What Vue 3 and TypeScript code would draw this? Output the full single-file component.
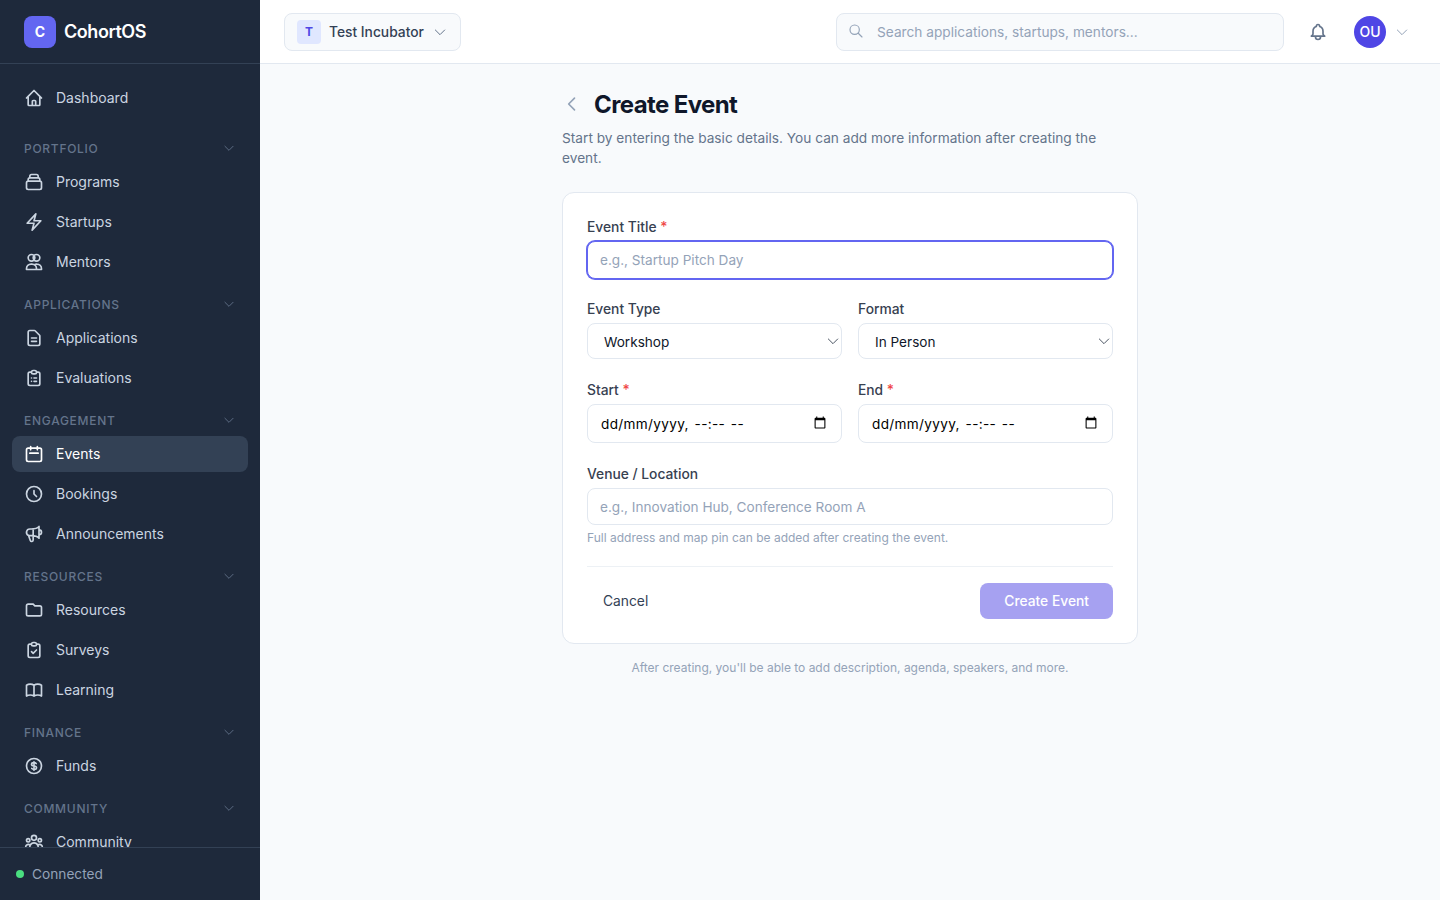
<script setup lang="ts">
interface Item { label: string; d: string; active?: boolean }
interface Section { title: string; items: Item[] }

const home = 'M3 12l2-2m0 0l7-7 7 7M5 10v10a1 1 0 001 1h3m10-11l2 2m-2-2v10a1 1 0 01-1 1h-3m-6 0a1 1 0 001-1v-4a1 1 0 011-1h2a1 1 0 011 1v4a1 1 0 001 1m-6 0h6'
const chevronDown = 'M19 9l-7 7-7-7'

const sections: Section[] = [
  { title: 'Portfolio', items: [
    { label: 'Programs', d: 'M19 11H5m14 0a2 2 0 012 2v6a2 2 0 01-2 2H5a2 2 0 01-2-2v-6a2 2 0 012-2m14 0V9a2 2 0 00-2-2M5 11V9a2 2 0 012-2m0 0V5a2 2 0 012-2h6a2 2 0 012 2v2M7 7h10' },
    { label: 'Startups', d: 'M3.75 13.5l10.5-11.25L12 10.5h8.25L9.75 21.75 12 13.5H3.75z' },
    { label: 'Mentors', d: 'M9 3a4 4 0 100 8 4 4 0 000-8zM15 3a4 4 0 100 8 4 4 0 000-8zM3 21v-1a5.5 5.5 0 015.5-5.5h1A5.5 5.5 0 0115 20v1M12.5 15.2a5.5 5.5 0 013-.7A5.5 5.5 0 0121 20v1M3 21h18' }
  ] },
  { title: 'Applications', items: [
    { label: 'Applications', d: 'M9 12h6m-6 4h6m2 5H7a2 2 0 01-2-2V5a2 2 0 012-2h5.586a1 1 0 01.707.293l5.414 5.414a1 1 0 01.293.707V19a2 2 0 01-2 2z' },
    { label: 'Evaluations', d: 'M9 5H7a2 2 0 00-2 2v12a2 2 0 002 2h10a2 2 0 002-2V7a2 2 0 00-2-2h-2M9 5a2 2 0 002 2h2a2 2 0 002-2M9 5a2 2 0 012-2h2a2 2 0 012 2m-3 7h3m-3 4h3m-6-4h.01M9 16h.01' }
  ] },
  { title: 'Engagement', items: [
    { label: 'Events', active: true, d: 'M8 7V3m8 4V3m-9 8h10M5 21h14a2 2 0 002-2V7a2 2 0 00-2-2H5a2 2 0 00-2 2v12a2 2 0 002 2z' },
    { label: 'Bookings', d: 'M12 8v4l3 3m6-3a9 9 0 11-18 0 9 9 0 0118 0z' },
    { label: 'Announcements', d: 'M11 5.882V19.24a1.76 1.76 0 01-3.417.592l-2.147-6.15M18 13a3 3 0 100-6M5.436 13.683A4.001 4.001 0 017 6h1.832c4.1 0 7.625-1.234 9.168-3v14c-1.543-1.766-5.067-3-9.168-3H7a3.988 3.988 0 01-1.564-.317z' }
  ] },
  { title: 'Resources', items: [
    { label: 'Resources', d: 'M3 7v10a2 2 0 002 2h14a2 2 0 002-2V9a2 2 0 00-2-2h-6l-2-2H5a2 2 0 00-2 2z' },
    { label: 'Surveys', d: 'M9 5H7a2 2 0 00-2 2v12a2 2 0 002 2h10a2 2 0 002-2V7a2 2 0 00-2-2h-2M9 5a2 2 0 002 2h2a2 2 0 002-2M9 5a2 2 0 012-2h2a2 2 0 012 2m-6 9l2 2 4-4' },
    { label: 'Learning', d: 'M12 6.253v13m0-13C10.832 5.477 9.246 5 7.5 5S4.168 5.477 3 6.253v13C4.168 18.477 5.754 18 7.5 18s3.332.477 4.5 1.253m0-13C13.168 5.477 14.754 5 16.5 5c1.747 0 3.332.477 4.5 1.253v13C19.832 18.477 18.247 18 16.5 18c-1.746 0-3.332.477-4.5 1.253' }
  ] },
  { title: 'Finance', items: [
    { label: 'Funds', d: 'M12 8c-1.657 0-3 .895-3 2s1.343 2 3 2 3 .895 3 2-1.343 2-3 2m0-8c1.11 0 2.08.402 2.599 1M12 8V7m0 1v8m0 0v1m0-1c-1.11 0-2.08-.402-2.599-1M21 12a9 9 0 11-18 0 9 9 0 0118 0z' }
  ] },
  { title: 'Community', items: [
    { label: 'Community', d: 'M17 20h5v-2a3 3 0 00-5.356-1.857M17 20H7m10 0v-2c0-.656-.126-1.283-.356-1.857M7 20H2v-2a3 3 0 015.356-1.857M7 20v-2c0-.656.126-1.283.356-1.857m0 0a5.002 5.002 0 019.288 0M15 7a3 3 0 11-6 0 3 3 0 016 0zm6 3a2 2 0 11-4 0 2 2 0 014 0zM7 10a2 2 0 11-4 0 2 2 0 014 0z' }
  ] }
]
</script>

<template>
  <div class="app">
    <aside class="sidebar">
      <div class="brand">
        <div class="logo">C</div>
        <span class="brand-name">CohortOS</span>
      </div>
      <nav class="nav">
        <a class="item top-item">
          <svg class="icon" viewBox="0 0 24 24"><path :d="home" /></svg>
          <span>Dashboard</span>
        </a>
        <section v-for="s in sections" :key="s.title" class="group">
          <div class="group-head">
            <span>{{ s.title }}</span>
            <svg class="group-chev" viewBox="0 0 24 24"><path :d="chevronDown" /></svg>
          </div>
          <a v-for="i in s.items" :key="i.label" class="item" :class="{ active: i.active }">
            <svg class="icon" viewBox="0 0 24 24"><path :d="i.d" /></svg>
            <span>{{ i.label }}</span>
          </a>
        </section>
      </nav>
      <div class="status">
        <span class="dot"></span>
        <span>Connected</span>
      </div>
    </aside>

    <div class="main">
      <header class="topbar">
        <button class="tenant" type="button">
          <span class="tenant-badge">T</span>
          <span class="tenant-name">Test Incubator</span>
          <svg class="tenant-chev" viewBox="0 0 24 24"><path :d="chevronDown" /></svg>
        </button>
        <div class="top-right">
          <div class="search">
            <svg class="search-icon" viewBox="0 0 24 24"><path d="M21 21l-6-6m2-5a7 7 0 11-14 0 7 7 0 0114 0z" /></svg>
            <input type="text" placeholder="Search applications, startups, mentors..." />
          </div>
          <svg class="bell" viewBox="0 0 24 24"><path d="M15 17h5l-1.405-1.405A2.032 2.032 0 0118 14.158V11a6.002 6.002 0 00-4-5.659V5a2 2 0 10-4 0v.341C7.67 6.165 6 8.388 6 11v3.159c0 .538-.214 1.055-.595 1.436L4 17h5m6 0v1a3 3 0 11-6 0v-1m6 0H9" /></svg>
          <div class="user">
            <span class="avatar">OU</span>
            <svg class="user-chev" viewBox="0 0 24 24"><path :d="chevronDown" /></svg>
          </div>
        </div>
      </header>

      <main class="content">
        <div class="page">
          <div class="title-row">
            <svg class="back" viewBox="0 0 24 24"><path d="M15 19l-7-7 7-7" /></svg>
            <h1>Create Event</h1>
          </div>
          <p class="desc">Start by entering the basic details. You can add more information after creating the event.</p>

          <form class="card" @submit.prevent>
            <div class="field">
              <label>Event Title <em>*</em></label>
              <input class="control focused" type="text" placeholder="e.g., Startup Pitch Day" />
            </div>
            <div class="row">
              <div class="field">
                <label>Event Type</label>
                <div class="select-wrap">
                  <select class="control select"><option>Workshop</option></select>
                  <svg class="select-chev" viewBox="0 0 24 24"><path :d="chevronDown" /></svg>
                </div>
              </div>
              <div class="field">
                <label>Format</label>
                <div class="select-wrap">
                  <select class="control select"><option>In Person</option></select>
                  <svg class="select-chev" viewBox="0 0 24 24"><path :d="chevronDown" /></svg>
                </div>
              </div>
            </div>
            <div class="row">
              <div class="field">
                <label>Start <em>*</em></label>
                <div class="date-wrap">
                  <input class="control date" type="datetime-local" />
                  <span class="date-mask">dd/mm/yyyy, --:-- --</span>
                </div>
              </div>
              <div class="field">
                <label>End <em>*</em></label>
                <div class="date-wrap">
                  <input class="control date" type="datetime-local" />
                  <span class="date-mask">dd/mm/yyyy, --:-- --</span>
                </div>
              </div>
            </div>
            <div class="field venue">
              <label>Venue / Location</label>
              <input class="control venue-input" type="text" placeholder="e.g., Innovation Hub, Conference Room A" />
              <p class="hint">Full address and map pin can be added after creating the event.</p>
            </div>
            <div class="actions">
              <button class="cancel" type="button">Cancel</button>
              <button class="submit" type="submit" disabled>Create Event</button>
            </div>
          </form>
          <p class="note">After creating, you'll be able to add description, agenda, speakers, and more.</p>
        </div>
      </main>
    </div>
  </div>
</template>

<style>
html, body { margin: 0; height: 100%; }
</style>

<style scoped>
* { box-sizing: border-box; }
svg { fill: none; stroke: currentColor; stroke-width: 2; stroke-linecap: round; stroke-linejoin: round; flex: none; display: block; }

.app { display: flex; height: 100vh; overflow: hidden; font-family: Inter, "Liberation Sans", sans-serif; font-size: 14px; background: #f8fafc; }

.sidebar { width: 260px; flex: none; display: flex; flex-direction: column; height: 100%; background: #1e293b; color: #cbd5e1; }
.brand { height: 64px; flex: none; display: flex; align-items: center; gap: 8px; padding: 0 24px; border-bottom: 1px solid #334155; }
.logo { width: 32px; height: 32px; border-radius: 8px; background: #6366f1; color: #fff; font-size: 14px; font-weight: 700; display: flex; align-items: center; justify-content: center; }
.brand-name { font-size: 18px; font-weight: 600; letter-spacing: -0.025em; color: #fff; }

.nav { flex: 1; min-height: 0; overflow: hidden; padding: 16px 12px 0; }
.item { display: flex; align-items: center; gap: 12px; height: 36px; padding: 0 12px; margin-bottom: 4px; border-radius: 8px; line-height: 20px; }
.top-item { margin-bottom: 12px; }
.item.active { background: #334155; color: #fff; }
.icon { width: 20px; height: 20px; }
.group { padding-top: 12px; }
.group-head { display: flex; align-items: center; justify-content: space-between; height: 16px; margin-bottom: 8px; padding: 0 12px; font-size: 12px; font-weight: 500; letter-spacing: 0.06em; text-transform: uppercase; color: #64748b; }
.group-chev { width: 14px; height: 14px; stroke-width: 1.5; }

.status { height: 53px; flex: none; display: flex; align-items: center; gap: 8px; padding: 0 16px 1px; border-top: 1px solid #334155; font-size: 13.7px; color: #94a3b8; }
.dot { width: 8px; height: 8px; border-radius: 50%; background: #4ade80; }

.main { flex: 1; min-width: 0; display: flex; flex-direction: column; }
.topbar { height: 64px; flex: none; display: flex; align-items: center; justify-content: space-between; padding: 0 24px; background: #fff; border-bottom: 1px solid #e2e8f0; }
.tenant { display: flex; align-items: center; gap: 8px; height: 38px; padding: 0 12px; border: 1px solid #e2e8f0; border-radius: 8px; background: #f8fafc; font: inherit; font-size: 13.8px; font-weight: 500; color: #334155; }
.tenant-badge { width: 24px; height: 24px; border-radius: 4px; background: #e0e7ff; color: #4f46e5; font-size: 12px; font-weight: 700; display: flex; align-items: center; justify-content: center; }
.tenant-chev { width: 16px; height: 16px; stroke-width: 1.5; color: #64748b; }
.top-right { display: flex; align-items: center; }
.search { width: 448px; height: 38px; display: flex; align-items: center; gap: 13px; padding: 0 12px; border: 1px solid #e2e8f0; border-radius: 8px; background: #f8fafc; }
.search-icon { width: 16px; height: 16px; margin: -2px 0 0 -1px; stroke-width: 1.75; color: #94a3b8; }
.search input { flex: 1; min-width: 0; border: 0; outline: 0; background: transparent; padding: 0; font: inherit; font-size: 13.7px; }
input::placeholder { color: #94a3b8; opacity: 1; }
.bell { width: 20px; height: 20px; margin-left: 24px; color: #64748b; }
.user { display: flex; align-items: center; gap: 8px; margin-left: 26px; padding-right: 6px; }
.avatar { width: 32px; height: 32px; border-radius: 50%; background: #4f46e5; color: #fff; font-weight: 500; display: flex; align-items: center; justify-content: center; }
.user-chev { width: 16px; height: 16px; stroke-width: 1.5; color: #94a3b8; }

.content { flex: 1; min-height: 0; overflow: hidden; padding: 24px; }
.page { width: 576px; margin: 0 auto; }
.title-row { display: flex; align-items: center; gap: 12px; height: 32px; }
.back { width: 20px; height: 20px; color: #94a3b8; }
h1 { margin: 0; padding-top: 2px; font-size: 24px; line-height: 32px; font-weight: 700; letter-spacing: -0.025em; color: #0f172a; }
.desc { margin: 8px 0 0; font-size: 13.7px; line-height: 20px; color: #64748b; }

.card { margin-top: 24px; padding: 24px; background: #fff; border: 1px solid #e2e8f0; border-radius: 12px; }
.field { display: flex; flex-direction: column; min-width: 0; margin-bottom: 20px; }
.row { display: grid; grid-template-columns: 1fr 1fr; gap: 16px; }
label { display: block; font-size: 13.8px; font-weight: 500; line-height: 20px; margin-bottom: 4px; color: #374151; }
label em { font-style: normal; color: #ef4444; }
.control { width: 100%; height: 38px; padding: 0 12px; border: 1px solid #e2e8f0; border-radius: 8px; background: #fff; font: inherit; font-size: 13.6px; color: #0f172a; outline: 0; }
.focused { border-color: #6366f1; box-shadow: 0 0 0 1px #6366f1; }
.select-wrap { position: relative; height: 36.5px; }
.select { display: block; height: 36px; padding: 2px 16px 0; appearance: none; }
.select-chev { position: absolute; top: 10px; right: 1px; width: 16px; height: 16px; stroke-width: 1.5; color: #4b5563; pointer-events: none; }
.date-wrap { position: relative; height: 40px; }
.date { display: block; height: 39.5px; }
.date::-webkit-datetime-edit { opacity: 0; }
.date-mask { position: absolute; left: 14px; top: 0; height: 40px; display: flex; align-items: center; font-size: 13.6px; letter-spacing: 0.025em; word-spacing: 1.5px; color: #000; pointer-events: none; }
.venue-input { height: 37.5px; padding-top: 1px; }
.hint { margin: 4.5px 0 0; font-size: 12px; line-height: 16px; color: #94a3b8; }
.actions { display: flex; align-items: center; justify-content: space-between; padding-top: 16px; border-top: 1px solid #edf1f5; }
.cancel { height: 36px; padding: 0 16px; border: 0; background: transparent; font: inherit; font-size: 13.8px; color: #334155; }
.submit { height: 36px; padding: 0 24px; border: 0; border-radius: 8px; background: #4f46e5; color: #fff; font: inherit; font-size: 13.8px; font-weight: 500; opacity: 0.5; }
.note { margin: 16px 0 0; text-align: center; font-size: 12px; line-height: 16px; color: #94a3b8; }
</style>
